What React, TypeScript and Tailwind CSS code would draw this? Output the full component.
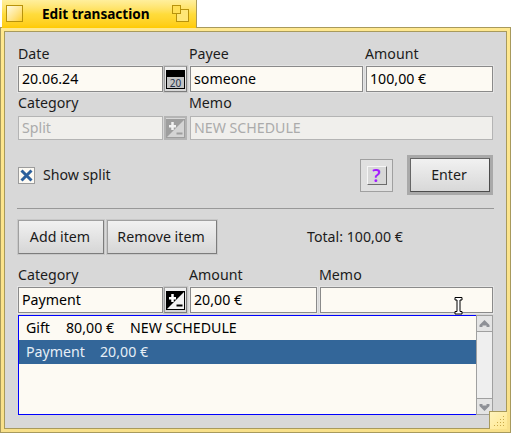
const inputCls =
  "flex items-center h-full px-[3px] pb-[1px] bg-[#fdfaf3] border border-[#8a8a8a] shadow-[0_0_0_1px_#e4e4e4] text-black";
const disabledCls =
  "flex items-center h-full px-[3px] bg-[#f0efec] border border-[#b4b4b4] text-[#ababab]";
const btnCls =
  "flex items-center justify-center h-full pr-[2px] border border-[#7c7c7c] border-t-[#a0a0a0] border-l-[#a0a0a0] bg-gradient-to-b from-[#f1f1f1] to-[#d6d6d6] shadow-[0_0_0_1px_#c8c8c8] text-[#1a1a1a]";
const iconBtnCls =
  "flex items-center justify-center h-full border border-[#7c7c7c] border-t-[#a0a0a0] border-l-[#a0a0a0] bg-gradient-to-b from-[#f1f1f1] to-[#d6d6d6] shadow-[0_0_0_1px_#c8c8c8]";

function CalendarIcon() {
  return (
    <svg width="19" height="19" viewBox="0 0 19 19">
      <rect x="0" y="0" width="19" height="19" fill="#000" />
      <rect x="1" y="7" width="17" height="11" fill="#c4c4c4" />
      <text x="9.5" y="16.5" textAnchor="middle" fontSize="10" fill="#25324a" fontFamily="Noto Sans, sans-serif">
        20
      </text>
    </svg>
  );
}

function PlusMinusIcon({ disabled }: { disabled?: boolean }) {
  const dark = disabled ? "#9e9e9e" : "#000";
  const edge = disabled ? "#9e9e9e" : "#000";
  return (
    <svg width="19" height="19" viewBox="0 0 19 19">
      <rect width="19" height="19" fill={edge} />
      <path d="M18 1V18H1Z" fill={disabled ? "#d4d4d4" : "#f2f2f2"} />
      <path d="M3 6H10V8.5H3ZM5.25 3H7.75V11H5.25Z" fill={disabled ? "#f2f2f2" : "#fff"} />
      <rect x="10.5" y="13.5" width="6" height="2" fill={dark} />
    </svg>
  );
}

function Arrow({ down }: { down?: boolean }) {
  return (
    <svg width="11" height="10" viewBox="0 0 11 10" className={down ? "rotate-180" : ""}>
      <path d="M5.5 1L10.5 6V8H7.5V6.5H3.5V8H0.5V6Z" fill="#8e9096" />
    </svg>
  );
}

function Label({ w, text, pb }: { w: string; text: string; pb: string }) {
  return <div className={`${w} ${pb} leading-none`}>{text}</div>;
}

export default function App() {
  return (
    <div
      className="relative w-[511px] h-[433px] bg-white text-[14.2px] text-[#1c1c1c] overflow-hidden"
      style={{ fontFamily: '"Noto Sans", sans-serif' }}
    >
      {/* tab */}
      <div className="relative z-10 ml-[2px] w-[195px] h-[28px] flex items-center border-r border-[#a89a5c] bg-gradient-to-b from-[#ffef9c] via-[#ffdc3c] to-[#ffcb00]">
        <div className="ml-[4px] w-[17px] h-[17px] border border-[#b8930c] bg-gradient-to-br from-[#fffbe0] to-[#ffd21e] mb-[1px]" />
        <div className="ml-[19px] w-[130px] text-[13.6px] font-bold text-black leading-none mb-[1px]">
          Edit transaction
        </div>
        <div className="relative w-[17px] h-[17px] mb-[1px]">
          <div className="absolute left-[4px] top-[4px] w-[13px] h-[13px] border border-[#b8930c] bg-[#ffe777]" />
          <div className="absolute left-0 top-0 w-[9px] h-[9px] border border-[#b8930c] bg-[#ffdf55]" />
        </div>
      </div>

      {/* window frame */}
      <div className="absolute left-0 right-0 top-[27px] bottom-0 border border-[#a89a5c] bg-[#fbe38a]">
        <div className="h-full p-[3px] bg-gradient-to-b from-[#ffe88f] to-[#f8e08a]">
          <div className="h-full border border-[#a89a5c] bg-[#d8d8d8]">
            <div className="h-full flex flex-col pl-[13px] pt-[14px]">
              {/* row 1 */}
              <div className="flex h-[20px] items-center">
                <Label w="w-[171px]" text="Date" pb="pb-[4px]" />
                <Label w="w-[176px]" text="Payee" pb="pb-[4px]" />
                <Label w="w-[127px]" text="Amount" pb="pb-[4px]" />
              </div>
              <div className="flex h-[26px]">
                <div className={`${inputCls} w-[145px]`}>20.06.24</div>
                <div className={`${iconBtnCls} w-[23px] ml-[1px]`}>
                  <CalendarIcon />
                </div>
                <div className={`${inputCls} w-[173px] ml-[3px]`}>someone</div>
                <div className={`${inputCls} w-[127px] ml-[3px]`}>100,00 €</div>
              </div>

              {/* row 2 */}
              <div className="flex h-[24px] items-center">
                <Label w="w-[171px]" text="Category" pb="pb-[2px]" />
                <Label w="w-[176px]" text="Memo" pb="pb-[2px]" />
              </div>
              <div className="flex h-[24px]">
                <div className={`${disabledCls} w-[145px]`}>Split</div>
                <div className="flex items-center justify-center w-[23px] ml-[1px] border-2 border-[#b4b4b4] bg-[#d8d8d8]">
                  <PlusMinusIcon disabled />
                </div>
                <div className={`${disabledCls} w-[303px] ml-[3px]`}>NEW SCHEDULE</div>
              </div>

              {/* split toggle + actions */}
              <div className="flex items-center h-[40px] mt-[15px]">
                <div className="flex items-center justify-center w-[17px] h-[17px] border border-[#9c9c9c] bg-[#fdfaf3]">
                  <svg width="13" height="13" viewBox="0 0 13 13">
                    <path d="M1.5 1.5L11.5 11.5M11.5 1.5L1.5 11.5" stroke="#2b5f9c" strokeWidth="3" />
                  </svg>
                </div>
                <div className="ml-[8px] w-[317px] leading-none">Show split</div>
                <div className="flex items-center justify-center w-[33px] h-[33px] border border-[#a0a0a0] bg-[#e0e0e0]">
                  <div className="flex items-center justify-center w-[20px] h-[19px] border border-[#f6f6f6] border-r-[#6c6c6c] border-b-[#6c6c6c] bg-[#d8d8d8] text-[#a31cff] text-[18px] font-semibold leading-none">
                    ?
                  </div>
                </div>
                <div className="ml-[14px] w-[86px] h-[40px] p-[3px] bg-[#a9a9a9]">
                  <div className="flex items-center justify-center h-full pr-[2px] border border-[#4c4c4c] border-t-[#666666] border-l-[#666666] bg-gradient-to-b from-[#f1f1f1] to-[#d8d8d8]">
                    Enter
                  </div>
                </div>
              </div>

              <div className="h-px w-[477px] -ml-px mt-[13px] bg-[#989898]" />

              {/* item buttons */}
              <div className="flex items-center h-[34px] mt-[11px]">
                <div className={`${btnCls} w-[86px]`}>Add item</div>
                <div className={`${btnCls} w-[110px] ml-[3px]`}>Remove item</div>
                <div className="ml-[90px] leading-none">Total: 100,00 €</div>
              </div>

              {/* item fields */}
              <div className="flex h-[33px] items-end">
                <Label w="w-[171px]" text="Category" pb="pb-[5px]" />
                <Label w="w-[130px]" text="Amount" pb="pb-[5px]" />
                <Label w="w-[127px]" text="Memo" pb="pb-[5px]" />
              </div>
              <div className="flex h-[26px]">
                <div className={`${inputCls} w-[145px]`}>Payment</div>
                <div className={`${iconBtnCls} w-[23px] ml-[1px]`}>
                  <PlusMinusIcon />
                </div>
                <div className={`${inputCls} w-[127px] ml-[3px]`}>20,00 €</div>
                <div className={`${inputCls} w-[173px] ml-[3px]`} />
              </div>

              {/* item list */}
              <div className="flex h-[100px] mt-[2px] w-[475px]">
                <div className="flex-1 border border-[#0000ff] border-r-0 bg-[#fdfaf3]">
                  <div className="flex items-center h-[24px] pl-[7px] pb-[1px] text-black">
                    <span className="w-[40px]">Gift</span>
                    <span className="w-[64px]">80,00 €</span>
                    <span>NEW SCHEDULE</span>
                  </div>
                  <div className="flex items-center h-[24px] pl-[7px] pb-[1px] bg-[#336699] text-[#e6eef6]">
                    <span className="w-[74px]">Payment</span>
                    <span>20,00 €</span>
                  </div>
                </div>
                <div className="flex flex-col w-[17px] border border-[#a0a0a0] bg-[#efefef]">
                  <div className="flex items-center justify-center h-[16px] border-b border-[#a0a0a0] bg-[#e4e4e4]">
                    <Arrow />
                  </div>
                  <div className="flex-1" />
                  <div className="flex items-center justify-center h-[16px] border-t border-[#a0a0a0] bg-[#e4e4e4]">
                    <Arrow down />
                  </div>
                </div>
              </div>
            </div>
          </div>
        </div>
      </div>

      {/* resize corner */}
      <div className="absolute left-[489px] top-[411px] w-[18px] h-[18px] border-l border-t border-[#a89a5c] bg-gradient-to-br from-[#fff3bb] to-[#ffe88f]">
        <svg width="17" height="17" viewBox="0 0 17 17" className="block">
          <path d="M13 4h1v1h-1zM10 7h1v1h-1zM13 7h1v1h-1zM7 10h1v1H7zM10 10h1v1h-1zM13 10h1v1h-1zM4 13h1v1H4zM7 13h1v1H7zM10 13h1v1h-1zM13 13h1v1h-1z" fill="#c9a94a" />
        </svg>
      </div>

      {/* mouse cursor */}
      <svg width="9" height="18" viewBox="0 0 9 18" className="absolute left-[454px] top-[297px]">
        <path d="M1 .5H8V3H6V14.5H8V17H1V14.5H3V3H1Z" fill="#fff" stroke="#000" strokeWidth="1" />
      </svg>
    </div>
  );
}
